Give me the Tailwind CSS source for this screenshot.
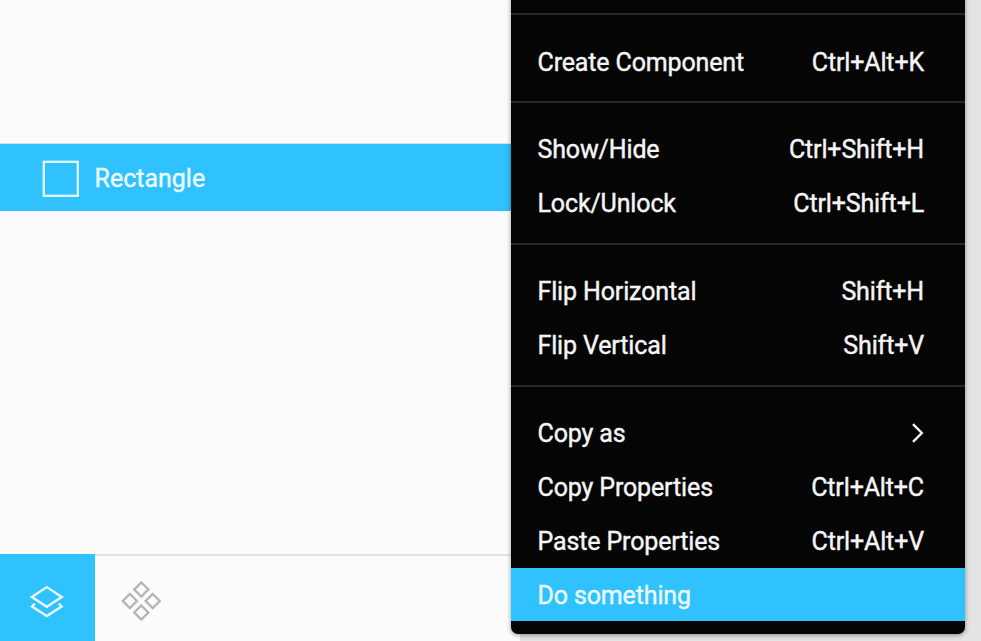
<!DOCTYPE html>
<html lang="en">
<head>
<meta charset="utf-8">
<title>Layers</title>
<script src="https://cdn.jsdelivr.net/npm/@tailwindcss/browser@4"></script>
</head>
<body class="relative h-[641px] w-[981px] overflow-hidden bg-[#e4e4e4] font-[Roboto,sans-serif] text-[25px] leading-[54px] text-[#f5f5f5] [-webkit-text-stroke:0.4px_currentColor]">
<aside class="flex h-full w-[520px] flex-col bg-[#fcfcfc]">
  <div class="h-[143px] shrink-0"></div>
  <div class="flex h-[68px] shrink-0 items-center border-t border-[#d3e2e8] bg-[#30c1ff] pt-px pl-[42px]">
    <svg class="mr-[15.5px] size-[37px]" viewBox="0 0 37 37" fill="none" stroke="#dcf6ff" stroke-width="2.4"><rect x="1.8" y="1.8" width="34" height="34"/></svg>
    <span class="pt-px text-[#eafaff]">Rectangle</span>
  </div>
  <div class="grow"></div>
  <nav class="flex h-[87px] shrink-0">
    <button class="flex w-[95px] items-center justify-center bg-[#30c1ff]">
      <svg class="h-[87px] w-[95px]" viewBox="0 0 95 87" fill="none" stroke="#eafaff" stroke-width="2.4" stroke-linejoin="miter"><path d="M31.8 42.9 46.8 33.1 61.8 42.9 46.8 52.7Z"/><path d="M34.8 49.6 32 52.5 46.8 62.1 61.6 52.5 58.8 49.6"/></svg>
    </button>
    <div class="grow border-t-2 border-[#e3e3e3]">
      <svg class="h-[85px] w-[95px]" viewBox="0 0 95 85" fill="none" stroke="#b5b5b5" stroke-width="2.4"><path d="M46.3 26.5 53.3 33.5 46.3 40.5 39.3 33.5ZM34.9 38 41.9 45 34.9 52 27.9 45ZM57.7 38 64.7 45 57.7 52 50.7 45ZM46.3 49.5 53.3 56.5 46.3 63.5 39.3 56.5Z"/></svg>
    </div>
  </nav>
</aside>
<div role="menu" class="absolute top-[-20px] left-[511px] flex h-[654px] w-[454px] flex-col rounded-[7px] bg-[#050505] pt-[33px] tracking-[-0.14px] shadow-[0_1px_5px_rgba(0,0,0,0.4)]">
  <hr class="mb-[21px] h-[2px] shrink-0 border-0 bg-[#292929]">
  <div class="flex justify-between pr-[41px] pl-[26.5px]"><span>Create Component</span><span>Ctrl+Alt+K</span></div>
  <hr class="mt-[11px] mb-[20px] h-[2px] shrink-0 border-0 bg-[#292929]">
  <div class="flex justify-between pr-[41px] pl-[26.5px]"><span>Show/Hide</span><span>Ctrl+Shift+H</span></div>
  <div class="flex justify-between pr-[41px] pl-[26.5px]"><span>Lock/Unlock</span><span>Ctrl+Shift+L</span></div>
  <hr class="mt-[12px] mb-[20px] h-[2px] shrink-0 border-0 bg-[#292929]">
  <div class="flex justify-between pr-[41px] pl-[26.5px]"><span>Flip Horizontal</span><span>Shift+H</span></div>
  <div class="flex justify-between pr-[41px] pl-[26.5px]"><span>Flip Vertical</span><span>Shift+V</span></div>
  <hr class="mt-[12px] mb-[20px] h-[2px] shrink-0 border-0 bg-[#292929]">
  <div class="flex items-center justify-between pr-[41px] pl-[26.5px]"><span>Copy as</span><svg class="mb-[2px] h-[20px] w-[13px]" viewBox="0 0 13 20" fill="none" stroke="#f5f5f5" stroke-width="2.4"><path d="M2 1.2 10.8 10 2 18.8"/></svg></div>
  <div class="flex justify-between pr-[41px] pl-[26.5px]"><span>Copy Properties</span><span>Ctrl+Alt+C</span></div>
  <div class="flex h-[53px] justify-between pr-[41px] pl-[26.5px]"><span>Paste Properties</span><span>Ctrl+Alt+V</span></div>
  <div class="h-[53px] bg-[#30c1ff] pt-px pl-[26.5px] text-[#eafaff]"><span>Do something</span></div>
</div>
</body>
</html>
